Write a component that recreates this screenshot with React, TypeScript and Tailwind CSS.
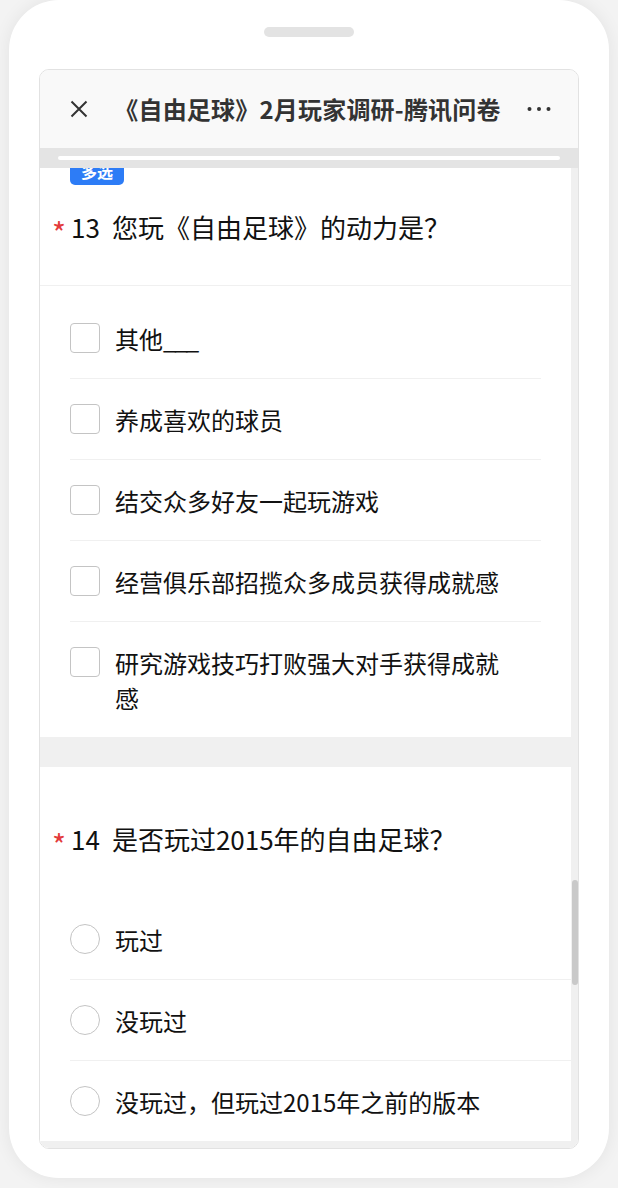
import React from "react";

const font = { fontFamily: '"Noto Sans CJK SC", "Noto Sans", sans-serif' };

function Checkbox() {
  return <div className="mt-[2px] h-[30px] w-[30px] shrink-0 rounded-[4px] border border-[#c4c4c4] bg-white" />;
}

function Radio() {
  return <div className="mt-[2px] h-[30px] w-[30px] shrink-0 rounded-full border border-[#c4c4c4] bg-white" />;
}

function Title({ num, text }: { num: string; text: string }) {
  return (
    <div className="flex h-[36px] items-center">
      <span className="w-[31px] translate-y-[5px] pl-[12px] text-[30px] leading-[36px] text-[#e33b3b]">*</span>
      <span className="text-[26px] leading-[36px] text-[#111]">
        {num}
        <span className="inline-block w-[12px]" />
        {text}
      </span>
    </div>
  );
}

export default function App() {
  const q13: React.ReactNode[] = [
    <>
      其他<span className="tracking-[-2px]">___</span>
    </>,
    "养成喜欢的球员",
    "结交众多好友一起玩游戏",
    "经营俱乐部招揽众多成员获得成就感",
    "研究游戏技巧打败强大对手获得成就感",
  ];
  const q14 = ["玩过", "没玩过", "没玩过，但玩过2015年之前的版本"];
  return (
    <div className="min-h-screen overflow-hidden bg-[#f3f3f3]" style={font}>
      <div className="ml-[9px] flex h-[1178px] w-[600px] flex-col items-center rounded-[50px] bg-white pt-[27px] shadow-[0_0_18px_rgba(0,0,0,0.07)]">
        <div className="h-[10px] w-[90px] rounded-full bg-[#e3e3e3]" />
        <div className="mt-[32px] flex h-[1080px] w-[540px] flex-col overflow-hidden rounded-[10px] border border-[#e2e2e2]">
          {/* header */}
          <div className="flex h-[78px] shrink-0 items-center justify-between bg-[#f9f9f9] pl-[30px] pr-[27px]">
            <svg width="18" height="18" viewBox="0 0 18 18">
              <path d="M1.5 1.5 L16.5 16.5 M16.5 1.5 L1.5 16.5" stroke="#333" strokeWidth="2" />
            </svg>
            <div className="text-[24px] font-bold leading-[30px] tracking-[0.2px] text-[#333]">《自由足球》2月玩家调研-腾讯问卷</div>
            <svg width="24" height="6" viewBox="0 0 24 6">
              <circle cx="2.5" cy="3" r="2" fill="#333" />
              <circle cx="12" cy="3" r="2" fill="#333" />
              <circle cx="21.5" cy="3" r="2" fill="#333" />
            </svg>
          </div>
          {/* progress */}
          <div className="h-[20px] shrink-0 bg-[#e4e4e4] px-[18px] pt-[8px]">
            <div className="h-[4px] rounded-full bg-white" />
          </div>
          {/* content */}
          <div className="flex min-h-0 flex-1">
            <div className="min-w-0 flex-1 overflow-hidden bg-white">
              {/* Q13 */}
              <div className="bg-white">
                <div className="ml-[30px] -mt-[11px] flex h-[28px] w-[54px] items-center justify-center rounded-[5px] bg-[#2d7cf6] text-[16px] font-bold text-white">
                  多选
                </div>
                <div className="mt-[24px] border-b border-[#f0f0f0] pb-[40px]">
                  <Title num="13" text="您玩《自由足球》的动力是？" />
                </div>
                <div className="pt-[12px]">
                  {q13.map((t, i) => (
                    <div
                      key={i}
                      className={`mx-[30px] flex items-start gap-[15px] py-[22.5px] ${i < q13.length - 1 ? "border-b border-[#f0f0f0]" : ""}`}
                    >
                      <Checkbox />
                      <div className="max-w-[400px] text-[24px] leading-[35px] text-[#111]">{t}</div>
                    </div>
                  ))}
                </div>
              </div>
              <div className="h-[30px] bg-[#f0f0f0]" />
              {/* Q14 */}
              <div className="bg-white pt-[54px]">
                <Title num="14" text="是否玩过2015年的自由足球？" />
                <div className="mt-[42px]">
                  {q14.map((t, i) => (
                    <div
                      key={t}
                      className={`ml-[30px] flex items-start gap-[15px] py-[22.5px] ${i < q14.length - 1 ? "border-b border-[#f0f0f0]" : ""}`}
                    >
                      <Radio />
                      <div className="text-[24px] leading-[35px] text-[#111]">{t}</div>
                    </div>
                  ))}
                </div>
              </div>
              <div className="h-[30px] bg-[#f0f0f0]" />
            </div>
            <div className="relative w-[7px] shrink-0 bg-[#f0f0f0]">
              <div className="absolute left-[1px] top-[712px] h-[105px] w-[6px] rounded-full bg-[#c9c9c9]" />
            </div>
          </div>
        </div>
      </div>
    </div>
  );
}
